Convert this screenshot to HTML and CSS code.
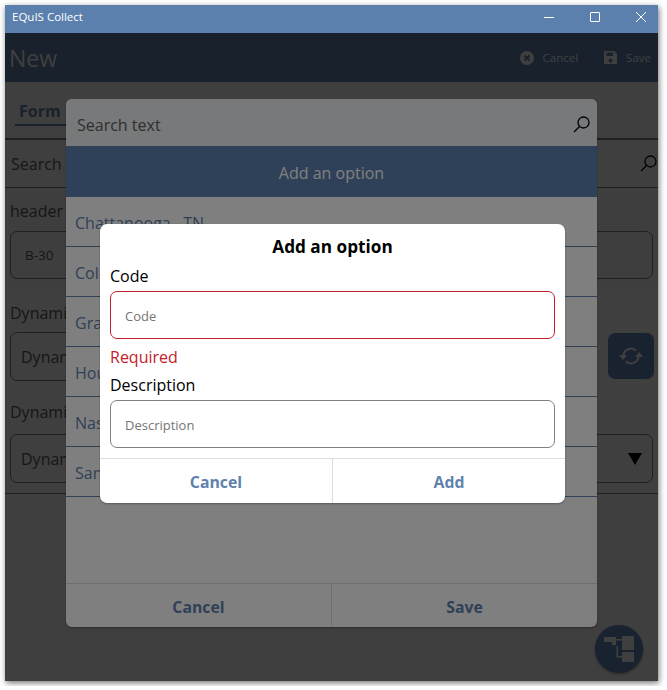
FILE: index.html
```html
<!DOCTYPE html>
<html lang="en">
<head>
  <meta charset="UTF-8" />
  <title>EQuIS Collect</title>
  <link rel="stylesheet" href="styles.css">
</head>
<body>

  <div class="window">

    <!-- title bar -->
    <div class="titlebar">
      <span class="titlebar-name">EQuIS Collect</span>
      <div class="titlebar-controls">
        <svg class="win-icon" width="10" height="10" viewBox="0 0 10 10"><path d="M0 5.500h10" /></svg>
        <svg class="win-icon" width="10" height="10" viewBox="0 0 10 10"><rect x="0.500" y="0.500" width="9" height="9" rx="0.500" /></svg>
        <svg class="win-icon" width="10" height="10" viewBox="0 0 10 10"><path d="M0 0l10 10M10 0l-10 10" /></svg>
      </div>
    </div>

    <div class="app">

      <!-- page header -->
      <header class="app-header">
        <h1>New</h1>
        <div class="header-actions">
          <span class="header-action">
            <svg width="14" height="14" viewBox="0 0 14 14"><circle cx="7" cy="7" r="7" fill="#fff" /><path d="M4.500 4.500l5 5M9.500 4.500l-5 5" stroke="#6484b0" stroke-width="2" /></svg>
            Cancel
          </span>
          <span class="header-action">
            <svg width="13" height="13" viewBox="0 0 13 13"><path fill="#fff" d="M1 0h9l3 3v9a1 1 0 0 1-1 1H1a1 1 0 0 1-1-1V1a1 1 0 0 1 1-1zm1.500 1.500v3.500h6.500V1.500zM6.500 7.500a2 2 0 1 0 0 4 2 2 0 0 0 0-4z" fill-rule="evenodd" /></svg>
            Save
          </span>
        </div>
      </header>

      <!-- form behind the popups -->
      <div class="tabs">
        <span class="tab">Form</span>
      </div>
      <div class="search-row">
        <span>Search</span>
        <svg class="search-icon" width="17" height="17" viewBox="0 0 17 17"><circle cx="10.500" cy="6.500" r="5.500" /><path d="M6.500 10.500L1 16" /></svg>
      </div>

      <section class="header-block">
        <div class="field-label">header</div>
        <div class="field-input small">B-30</div>
      </section>

      <section class="dynamic-block">
        <div class="field-label">Dynamic Lookup</div>
        <div class="field-row">
          <div class="field-input">Dynamic Lookup</div>
          <button class="refresh-btn">
            <svg width="24" height="18" viewBox="0 0 24 18"><path d="M4.500 9.500A7.500 7.500 0 0 1 17 3.500M19.500 8.500A7.500 7.500 0 0 1 7 14.500" /><path class="arrow" d="M0 8h8l-4 5zM24 10h-8l4-5z" /></svg>
          </button>
        </div>
        <div class="field-label second">Dynamic Select</div>
        <div class="field-input select">
          Dynamic Select
          <span class="select-arrow"></span>
        </div>
      </section>

      <button class="fab">
        <svg width="30" height="28" viewBox="0 0 30 28"><path fill="#fff" d="M0 2h12v8H8V7H0zM18 1h12v14H18zM18 17h12v10H18zM12 4h6v1.500h-6zM12.500 11H14v10h4v1.500h-5.500z" /></svg>
      </button>

      <div class="dim"></div>

      <!-- option list popup -->
      <div class="picker">
        <div class="picker-search">
          <span>Search text</span>
          <svg class="search-icon" width="17" height="17" viewBox="0 0 17 17"><circle cx="10.500" cy="6.500" r="5.500" /><path d="M6.500 10.500L1 16" /></svg>
        </div>
        <div class="picker-add">Add an option</div>
        <ul class="picker-list">
          <li>Chattanooga , TN</li>
          <li>Columbia , SC</li>
          <li>Grand Rapids , MI</li>
          <li>Houston , TX</li>
          <li>Nashville , TN</li>
          <li>San Diego , CA</li>
        </ul>
        <div class="btn-row picker-buttons">
          <button>Cancel</button>
          <button>Save</button>
        </div>
      </div>

      <div class="dim"></div>

      <!-- add option dialog -->
      <div class="dialog">
        <h2>Add an option</h2>
        <div class="dialog-body">
          <label>Code</label>
          <div class="dialog-input invalid">Code</div>
          <div class="error">Required</div>
          <label>Description</label>
          <div class="dialog-input">Description</div>
        </div>
        <div class="btn-row dialog-buttons">
          <button>Cancel</button>
          <button>Add</button>
        </div>
      </div>

    </div>
  </div>

</body>
</html>
```

FILE: styles.css
```css
* {
  margin: 0;
  padding: 0;
  box-sizing: border-box;
}

body {
  font-family: "Open Sans", "Noto Sans", sans-serif;
  background-color: #fff;
  color: #000;
}

/* window */
.window {
  width: 653px;
  height: 676px;
  margin: 5px;
  display: flex;
  flex-direction: column;
  box-shadow: 1px 2px 6px rgba(0, 0, 0, 0.55);
}

.titlebar {
  height: 28px;
  flex-shrink: 0;
  display: flex;
  align-items: center;
  justify-content: space-between;
  padding: 0 12px 5px 7px;
  background-color: #5b80ae;
  color: #fff;
}

.titlebar-name {
  font-size: 11.500px;
}

.titlebar-controls {
  display: flex;
  gap: 36px;
}

.win-icon {
  display: block;
}

.win-icon path,
.win-icon rect {
  fill: none;
  stroke: #fff;
  stroke-width: 1;
}

.app {
  flex: 1;
  position: relative;
  overflow: hidden;
  background-color: #fff;
}

/* page header */
.app-header {
  height: 49px;
  display: flex;
  align-items: center;
  justify-content: space-between;
  padding: 0 7px 0 4px;
  background-color: #6484b0;
  color: #fff;
}

.app-header h1 {
  font-size: 23px;
  font-weight: 400;
}

.header-actions {
  display: flex;
  gap: 26px;
}

.header-action {
  display: flex;
  align-items: center;
  gap: 9px;
  font-size: 11.500px;
}

/* form behind */
.tabs {
  height: 58px;
  padding: 18px 0 0 10px;
  border-bottom: 2px solid #808080;
}

.tab {
  display: inline-block;
  width: 60px;
  height: 24px;
  padding-left: 4px;
  font-size: 16px;
  font-weight: 700;
  line-height: 19px;
  color: #6484b0;
  border-bottom: 2px solid #6484b0;
}

.search-row {
  height: 48px;
  display: flex;
  align-items: center;
  justify-content: space-between;
  padding: 0 1px 0 6px;
  font-size: 16px;
  color: #5a5a5a;
  border-bottom: 1px solid #808080;
}

.search-icon {
  display: block;
}

.search-icon circle,
.search-icon path {
  fill: none;
  stroke: #000;
  stroke-width: 1.300;
}

.header-block {
  height: 101px;
  padding: 11px 5px 0;
  background-color: #f8f8f8;
}

.dynamic-block {
  height: 205px;
  padding: 12px 5px 0;
  border-bottom: 1px solid #808080;
  background-color: #fff;
}

.field-label {
  height: 32px;
  font-size: 16px;
  line-height: 24px;
  color: #5a5a5a;
}

.field-label.second {
  margin-top: 19px;
  height: 34px;
}

.field-input {
  height: 49px;
  display: flex;
  align-items: center;
  justify-content: space-between;
  padding: 0 10px 0 10px;
  font-size: 16px;
  color: #5a5a5a;
  border: 1px solid #808080;
  border-radius: 7px;
}

.field-input.small {
  height: 48px;
  padding-left: 14px;
  font-size: 13.500px;
}

.field-row {
  display: flex;
  gap: 11px;
  align-items: flex-start;
  margin: -1px -1px 0 0;
}

.field-row .field-input {
  flex: 1;
}

.refresh-btn {
  width: 46px;
  height: 46px;
  margin-top: 1px;
  flex-shrink: 0;
  display: flex;
  align-items: center;
  justify-content: center;
  border: none;
  border-radius: 7px;
  background-color: #668cc0;
}

.refresh-btn path {
  fill: none;
  stroke: #fff;
  stroke-width: 2;
}

.refresh-btn path.arrow {
  fill: #fff;
  stroke: none;
}

.select-arrow {
  width: 0;
  height: 0;
  border-left: 7px solid transparent;
  border-right: 7px solid transparent;
  border-top: 12px solid #000;
}

.fab {
  position: absolute;
  left: 590px;
  top: 592px;
  width: 48px;
  height: 48px;
  display: flex;
  align-items: center;
  justify-content: center;
  border: none;
  border-radius: 50%;
  background-color: #668cc0;
  box-shadow: 0 1px 3px rgba(0, 0, 0, 0.4);
}

/* dark layer under a popup */
.dim {
  position: absolute;
  inset: 0;
  background-color: rgba(0, 0, 0, 0.5);
}

/* option list popup */
.picker {
  position: absolute;
  left: 61px;
  top: 66px;
  width: 531px;
  height: 528px;
  display: flex;
  flex-direction: column;
  border-radius: 6px;
  overflow: hidden;
  background-color: #fff;
  box-shadow: 0 1px 2px rgba(0, 0, 0, 0.3);
}

.picker-search {
  height: 47px;
  flex-shrink: 0;
  display: flex;
  align-items: center;
  justify-content: space-between;
  padding: 4px 7px 0 11px;
  font-size: 16px;
  color: #606060;
  background-color: #eff2f4;
}

.picker-add {
  height: 51px;
  flex-shrink: 0;
  display: flex;
  align-items: center;
  justify-content: center;
  padding-top: 2px;
  font-size: 16px;
  color: #fff;
  background-color: #5e82b0;
}

.picker-list {
  flex: 1;
  list-style: none;
}

.picker-list li {
  height: 50px;
  padding: 15px 0 0 9px;
  font-size: 16px;
  line-height: 22px;
  color: #5f82ad;
  border-bottom: 1px solid #5f82ad;
}

.btn-row {
  flex-shrink: 0;
  display: flex;
  border-top: 1px solid #ddd;
}

.btn-row button {
  flex: 1;
  padding-top: 2px;
  border: none;
  background: none;
  font-family: inherit;
  font-size: 15.800px;
  font-weight: 700;
  color: #5f82ad;
}

.btn-row button + button {
  border-left: 1px solid #ddd;
}

.picker-buttons {
  height: 44px;
}

/* add option dialog */
.dialog {
  position: absolute;
  left: 95px;
  top: 191px;
  width: 465px;
  height: 279px;
  display: flex;
  flex-direction: column;
  border-radius: 7px;
  overflow: hidden;
  background-color: #fff;
  box-shadow: 0 1px 2px rgba(0, 0, 0, 0.3);
}

.dialog h2 {
  height: 40px;
  padding-top: 10px;
  text-align: center;
  font-size: 17.200px;
  line-height: 26px;
}

.dialog-body {
  flex: 1;
  padding: 0 10px;
}

.dialog-body label {
  display: block;
  height: 27px;
  font-size: 16px;
  line-height: 24px;
}

.dialog-input {
  height: 48px;
  display: flex;
  align-items: center;
  padding: 2px 0 0 14px;
  font-size: 13px;
  color: #757575;
  border: 1px solid #808080;
  border-radius: 7px;
}

.dialog-input.invalid {
  border-color: #c0202c;
}

.error {
  height: 34px;
  padding-top: 6px;
  font-size: 16px;
  line-height: 24px;
  color: #c4202a;
}

.dialog-buttons {
  height: 45px;
}
```
